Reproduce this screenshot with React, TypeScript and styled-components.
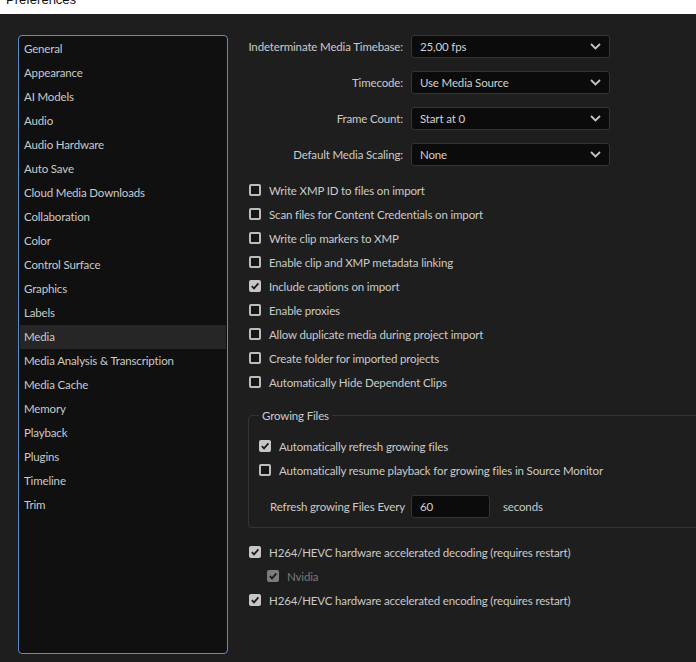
import styled, { createGlobalStyle } from 'styled-components'

const GlobalStyle = createGlobalStyle`
  html, body {
    margin: 0;
    padding: 0;
    background: #1e1e1e;
  }
  body {
    font-family: Lato, 'Open Sans', 'Liberation Sans', sans-serif;
  }
`

const sections = [
  'General',
  'Appearance',
  'AI Models',
  'Audio',
  'Audio Hardware',
  'Auto Save',
  'Cloud Media Downloads',
  'Collaboration',
  'Color',
  'Control Surface',
  'Graphics',
  'Labels',
  'Media',
  'Media Analysis & Transcription',
  'Media Cache',
  'Memory',
  'Playback',
  'Plugins',
  'Timeline',
  'Trim',
]

const selects = [
  { label: 'Indeterminate Media Timebase:', value: '25,00 fps' },
  { label: 'Timecode:', value: 'Use Media Source' },
  { label: 'Frame Count:', value: 'Start at 0' },
  { label: 'Default Media Scaling:', value: 'None' },
]

const importOptions = [
  { label: 'Write XMP ID to files on import', checked: false },
  { label: 'Scan files for Content Credentials on import', checked: false },
  { label: 'Write clip markers to XMP', checked: false },
  { label: 'Enable clip and XMP metadata linking', checked: false },
  { label: 'Include captions on import', checked: true },
  { label: 'Enable proxies', checked: false },
  { label: 'Allow duplicate media during project import', checked: false },
  { label: 'Create folder for imported projects', checked: false },
  { label: 'Automatically Hide Dependent Clips', checked: false },
]

function Chevron() {
  return (
    <svg width="11" height="7" viewBox="0 0 11 7">
      <path d="M1 1 L5.5 5.5 L10 1" fill="none" stroke="#c4c4c4" strokeWidth="1.8" />
    </svg>
  )
}

function Check({ checked, dim }: { checked: boolean; dim?: boolean }) {
  return (
    <Box $checked={checked} $dim={dim}>
      {checked && (
        <svg width="10" height="10" viewBox="0 0 10 10">
          <path d="M1.8 5.2 L4 7.4 L8.4 2.4" fill="none" stroke="#1a1a1a" strokeWidth="1.7" />
        </svg>
      )}
    </Box>
  )
}

function Option({ label, checked, dim }: { label: string; checked: boolean; dim?: boolean }) {
  return (
    <CheckRow>
      <Check checked={checked} dim={dim} />
      <CheckLabel $dim={dim}>{label}</CheckLabel>
    </CheckRow>
  )
}

export default function App() {
  return (
    <Window>
      <GlobalStyle />
      <TitleBar>
        <span>Preferences</span>
      </TitleBar>
      <Body>
        <Sidebar>
          {sections.map((s) => (
            <NavItem key={s} $active={s === 'Media'}>
              {s}
            </NavItem>
          ))}
        </Sidebar>
        <Content>
          <SelectGrid>
            {selects.map((s) => (
              <SelectRow key={s.label}>
                <FieldLabel>{s.label}</FieldLabel>
                <Dropdown>
                  <span>{s.value}</span>
                  <Chevron />
                </Dropdown>
              </SelectRow>
            ))}
          </SelectGrid>
          <CheckList>
            {importOptions.map((o) => (
              <Option key={o.label} label={o.label} checked={o.checked} />
            ))}
          </CheckList>
          <Group>
            <Legend>Growing Files</Legend>
            <Option label="Automatically refresh growing files" checked />
            <Option label="Automatically resume playback for growing files in Source Monitor" checked={false} />
            <RefreshRow>
              <RefreshLabel>Refresh growing Files Every</RefreshLabel>
              <NumberInput>60</NumberInput>
              <Unit>seconds</Unit>
            </RefreshRow>
          </Group>
          <CheckList>
            <Option label="H264/HEVC hardware accelerated decoding (requires restart)" checked />
            <Indented>
              <Option label="Nvidia" checked dim />
            </Indented>
            <Option label="H264/HEVC hardware accelerated encoding (requires restart)" checked />
          </CheckList>
        </Content>
      </Body>
    </Window>
  )
}

const Window = styled.div`
  width: 696px;
  height: 662px;
  overflow: hidden;
  background: #1e1e1e;
  color: #cacaca;
  font-size: 11.5px;
  letter-spacing: -0.15px;
`

const TitleBar = styled.div`
  height: 14px;
  background: #ffffff;
  overflow: hidden;
  span {
    display: block;
    margin-top: -10px;
    padding-left: 6px;
    font-family: 'Liberation Sans', sans-serif;
    font-size: 13px;
    letter-spacing: 0;
    color: #111;
    line-height: 20px;
  }
`

const Body = styled.div`
  display: flex;
  padding: 21px 0 0 18px;
  gap: 20px;
`

const Sidebar = styled.div`
  width: 210px;
  height: 619px;
  box-sizing: border-box;
  border: 1px solid #5a8ccc;
  border-radius: 4px;
  background: #101010;
  padding: 1px;
`

const NavItem = styled.div<{ $active?: boolean }>`
  height: 24px;
  line-height: 24px;
  padding-left: 4px;
  background: ${(p) => (p.$active ? '#262626' : 'transparent')};
  color: #cacaca;
  white-space: nowrap;
`

const Content = styled.div`
  flex: 1;
  display: flex;
  flex-direction: column;
`

const SelectGrid = styled.div`
  display: flex;
  flex-direction: column;
  gap: 13px;
`

const SelectRow = styled.div`
  display: grid;
  grid-template-columns: 155px 199px;
  column-gap: 8px;
  align-items: center;
`

const FieldLabel = styled.div`
  text-align: right;
  white-space: nowrap;
`

const Dropdown = styled.div`
  height: 23px;
  box-sizing: border-box;
  border: 1px solid #343434;
  border-radius: 3px;
  background: #0b0b0b;
  display: flex;
  align-items: center;
  justify-content: space-between;
  padding: 0 8px;
  color: #d0d0d0;
`

const CheckList = styled.div`
  display: flex;
  flex-direction: column;
  margin-top: 12px;
`

const CheckRow = styled.div`
  height: 24px;
  display: flex;
  align-items: center;
  gap: 8px;
`

const Box = styled.div<{ $checked: boolean; $dim?: boolean }>`
  width: 12px;
  height: 12px;
  box-sizing: border-box;
  border-radius: 2px;
  flex: none;
  margin-left: 1px;
  display: flex;
  align-items: center;
  justify-content: center;
  background: ${(p) => (p.$checked ? (p.$dim ? '#7c7c7c' : '#c6c6c6') : '#151515')};
  border: ${(p) => (p.$checked ? 'none' : '2px solid #bcbcbc')};
`

const CheckLabel = styled.span<{ $dim?: boolean }>`
  color: ${(p) => (p.$dim ? '#7a7a7a' : '#cacaca')};
  white-space: nowrap;
`

const Group = styled.fieldset`
  margin: 15px -20px 0 0;
  padding: 12px 9px 9px 9px;
  border: 1px solid #343434;
  border-radius: 4px;
  min-width: 0;
`

const Legend = styled.legend`
  padding: 0 3px;
  margin-left: 1px;
  color: #cacaca;
`

const RefreshRow = styled.div`
  display: flex;
  align-items: center;
  margin-top: 13px;
  padding-left: 12px;
`

const RefreshLabel = styled.div`
  width: 133px;
  white-space: nowrap;
`

const NumberInput = styled.div`
  width: 79px;
  height: 23px;
  box-sizing: border-box;
  margin-left: 8px;
  border: 1px solid #343434;
  border-radius: 3px;
  background: #0b0b0b;
  padding-left: 8px;
  line-height: 21px;
  color: #d0d0d0;
`

const Unit = styled.span`
  margin-left: 13px;
`

const Indented = styled.div`
  padding-left: 18px;
`
